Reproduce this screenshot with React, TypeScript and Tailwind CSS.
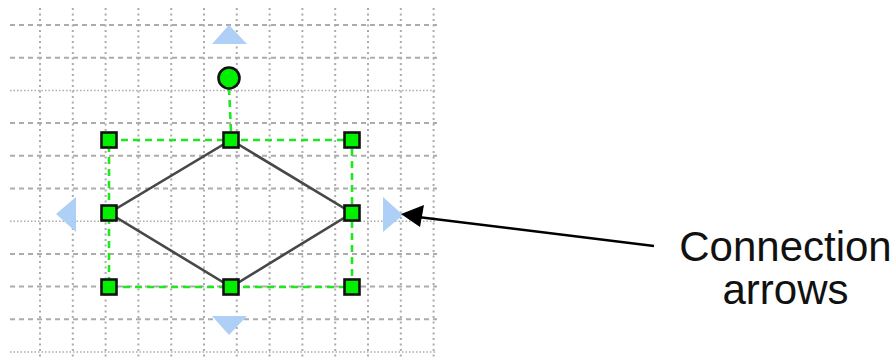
import React from 'react';

const cols = Array.from({ length: 13 }, (_, i) => 40 + i * 32.8);
const rows = Array.from({ length: 11 }, (_, j) => 25 + j * 32.7);
// every fourth row (starting at the third) is drawn as a fine dotted line
const dottedRows = new Set([2, 6, 10]);

const handles = [
  [109, 140], [231, 140], [352, 140],
  [109, 213], [352, 213],
  [109, 287], [231, 287], [352, 287],
];

function Diagram() {
  return (
    <svg width={670} height={360} viewBox="0 0 670 360" className="shrink-0">
      {/* grid */}
      <g stroke="#acacac" strokeWidth={2}>
        {cols.map((x, i) => (
          <line key={`v${i}`} x1={x} y1={8} x2={x} y2={358} strokeDasharray="2 3.5" />
        ))}
        {rows.map((y, j) => (
          <line
            key={`h${j}`}
            x1={10}
            y1={y}
            x2={437}
            y2={y}
            strokeDasharray={dottedRows.has(j) ? '1.5 2' : '5 4'}
            strokeWidth={dottedRows.has(j) ? 1.5 : 2}
          />
        ))}
      </g>

      {/* connection arrows */}
      <g fill="#aecff6">
        <polygon points="229,25 247,44 212,44" />
        <polygon points="56,214 76,197 76,232" />
        <polygon points="403,215 383,197 383,232" />
        <polygon points="229,335 212,316 247,316" />
      </g>

      {/* selection box */}
      <g stroke="#1fe81f" strokeWidth={2.6} fill="none" strokeDasharray="7 5">
        <rect x={109} y={140} width={243} height={147} />
        <line x1={229} y1={88} x2={231} y2={132} />
      </g>

      {/* diamond */}
      <polygon
        points="231,140 352,213 231,287 109,213"
        fill="none"
        stroke="#474747"
        strokeWidth={2.6}
      />

      {/* handles */}
      {handles.map(([x, y], i) => (
        <rect key={i} x={x - 7.5} y={y - 7.5} width={15} height={15} fill="#00f000" stroke="#111" strokeWidth={2.6} />
      ))}
      <circle cx={229} cy={78} r={10.5} fill="#00f000" stroke="#111" strokeWidth={2.6} />

      {/* callout arrow */}
      <line x1={418} y1={217} x2={654} y2={246} stroke="#000" strokeWidth={2.6} />
      <polygon points="401,214 424,205 420,227" fill="#000" />
    </svg>
  );
}

export default function App() {
  return (
    <div className="w-[895px] h-[360px] bg-white flex overflow-hidden">
      <Diagram />
      <div className="flex-1 pt-[225px] pl-[6px] text-center text-[42px] leading-[43px] text-[#111] font-['Liberation_Sans',Arial,sans-serif]">
        <div>Connection</div>
        <div>arrows</div>
      </div>
    </div>
  );
}
